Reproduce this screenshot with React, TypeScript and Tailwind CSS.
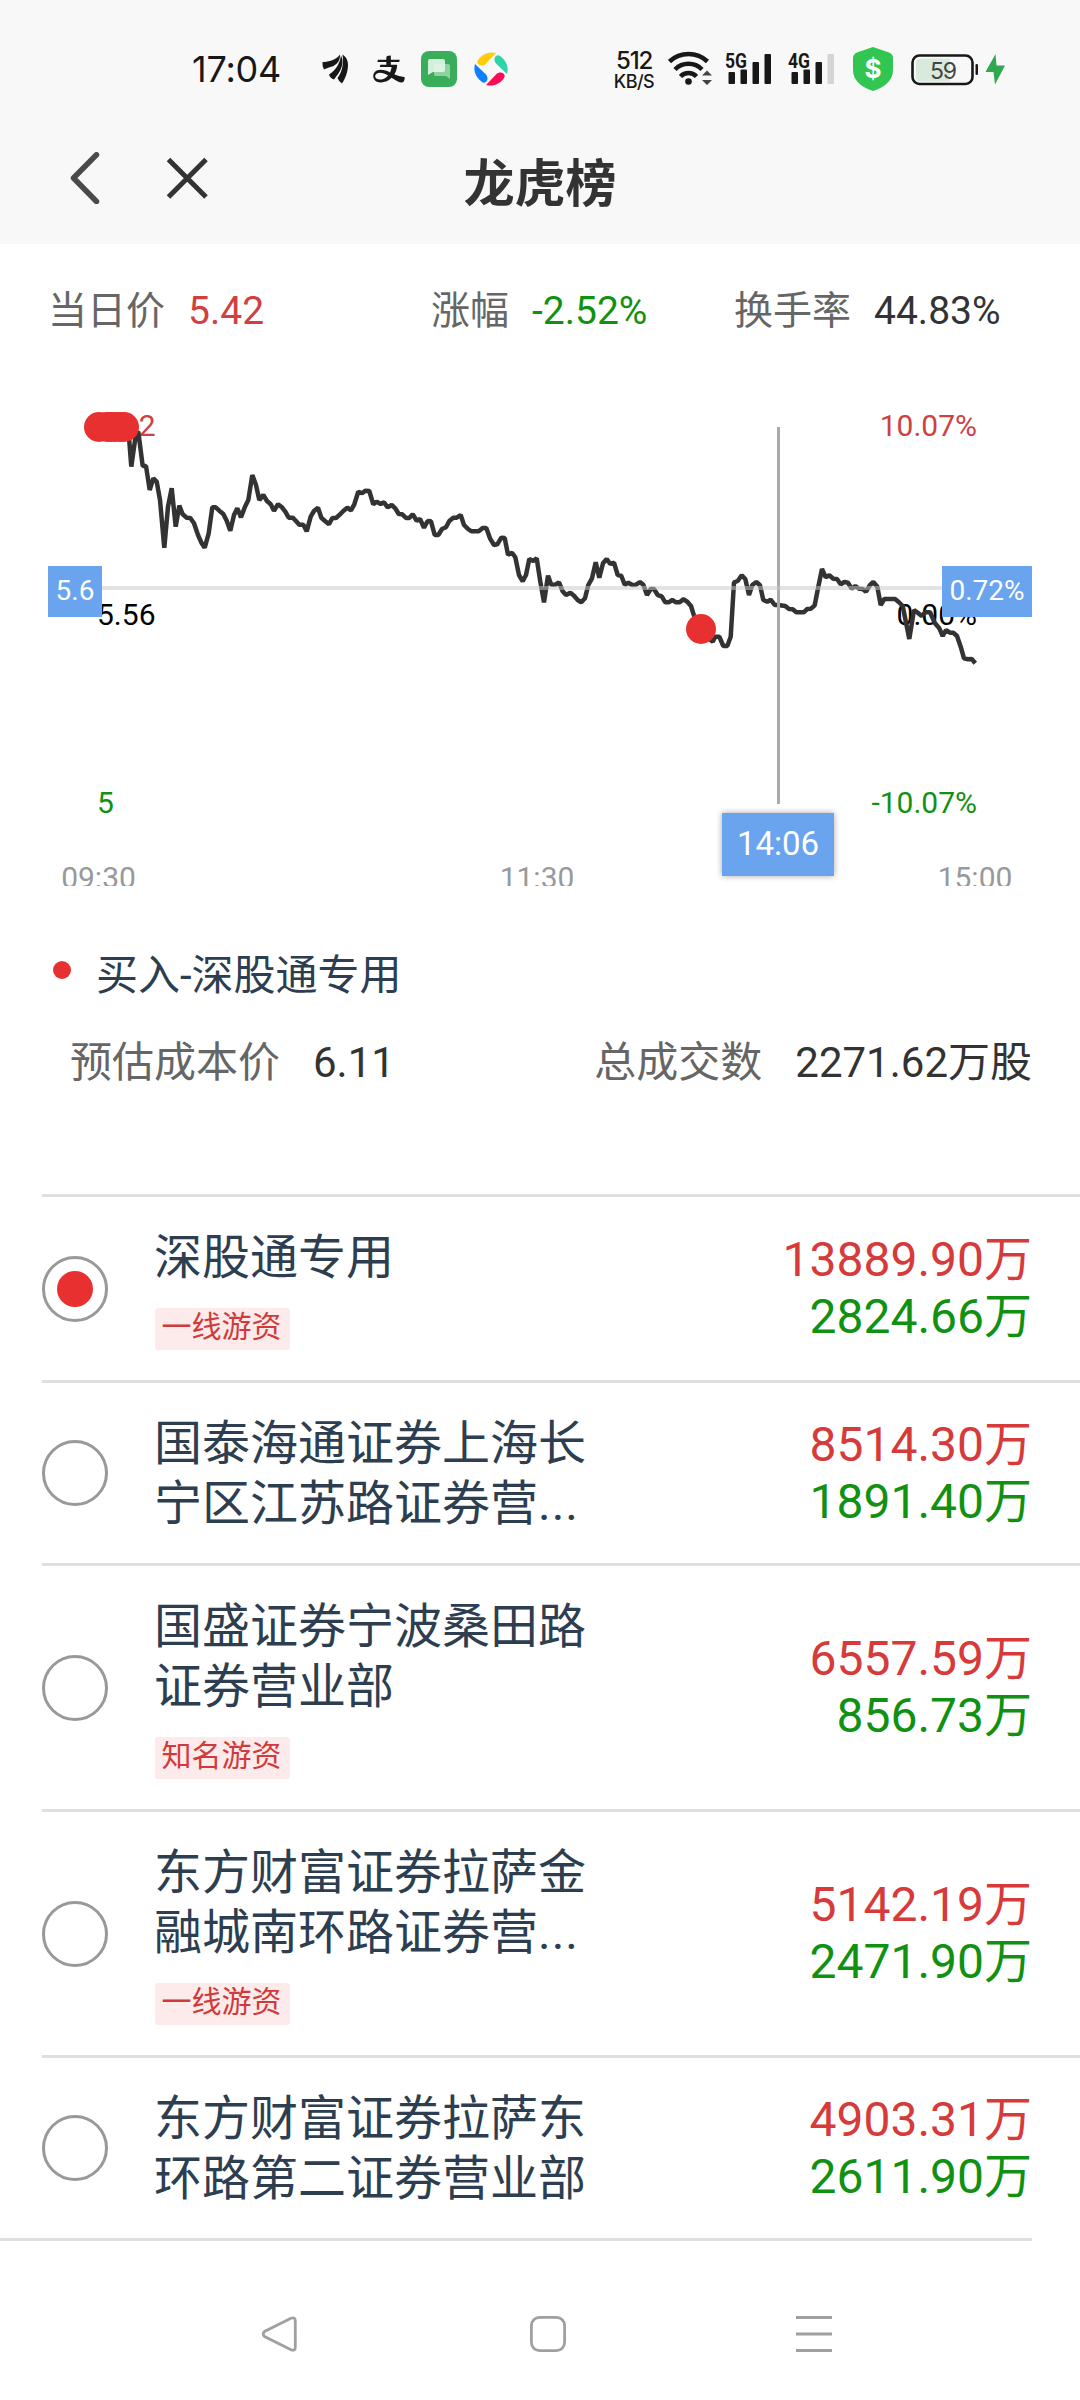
import { AiOutlineAlipay } from "react-icons/ai";

type Seat = {
  name: string;
  tag?: string;
  buy: string;
  sell: string;
};

const seats: Seat[] = [
  { name: "深股通专用", tag: "一线游资", buy: "13889.90万", sell: "2824.66万" },
  { name: "国泰海通证券上海长宁区江苏路证券营业部", buy: "8514.30万", sell: "1891.40万" },
  { name: "国盛证券宁波桑田路证券营业部", tag: "知名游资", buy: "6557.59万", sell: "856.73万" },
  { name: "东方财富证券拉萨金融城南环路证券营业部", tag: "一线游资", buy: "5142.19万", sell: "2471.90万" },
  { name: "东方财富证券拉萨东环路第二证券营业部", buy: "4903.31万", sell: "2611.90万" },
];

// two lines hold 18 characters, longer names lose their tail
const MAX_NAME = 18;

const blocks: { x: number; y: number; points: number[][] }[] = [
  {
    x: 30,
    y: 0,
    points: [
      [285, 112], [296, 130], [304, 230], [318, 130], [325, 125], [338, 228], [348, 228], [359, 300], [370, 265], [380, 275],
      [390, 330], [403, 473], [414, 350], [425, 295], [437, 410], [448, 347], [458, 373], [470, 383], [481, 384], [492, 400],
      [504, 435], [515, 460], [524, 473], [536, 430], [547, 352], [557, 352], [568, 362], [580, 372], [590, 392], [601, 422],
      [612, 375], [622, 355], [633, 382], [645, 350], [655, 330], [667, 255], [678, 285], [688, 330], [700, 315], [711, 333],
      [722, 343], [732, 362], [744, 343], [756, 352], [766, 365], [776, 383], [788, 383], [798, 393], [808, 404], [820, 404],
      [830, 424], [842, 380], [852, 363], [864, 353], [874, 383], [885, 393], [897, 403], [907, 384], [918, 384], [930, 373],
      [940, 363], [952, 353], [963, 361], [973, 343], [985, 305], [996, 310], [1006, 302], [1018, 303], [1030, 343], [1040, 335],
      [1052, 342], [1062, 337], [1073, 352],
    ],
  },
  {
    x: 360,
    y: 60,
    points: [
      [95, 165], [106, 175], [116, 192], [127, 193], [138, 204], [148, 204], [158, 193], [170, 212], [180, 207], [192, 233],
      [203, 213], [213, 214], [224, 255], [235, 255], [246, 237], [258, 232], [268, 213], [280, 203], [290, 203], [302, 195],
      [312, 225], [323, 236], [334, 244], [356, 244], [368, 234], [379, 234], [390, 265], [402, 285], [412, 283], [424, 263],
      [434, 264], [444, 314], [456, 308], [466, 322], [477, 375], [488, 394], [498, 375], [508, 327], [520, 333], [530, 325],
      [541, 395], [552, 457], [564, 377], [574, 404], [586, 404], [597, 397], [608, 424], [618, 435], [631, 428], [642, 437],
      [653, 450], [664, 457], [675, 445], [685, 405], [696, 385], [707, 337], [718, 383], [729, 340], [740, 327], [751, 342],
      [762, 338], [773, 375], [784, 377], [794, 404], [805, 398], [817, 405], [828, 404], [840, 396], [850, 404], [861, 435],
      [872, 417], [882, 417], [893, 435], [905, 439], [916, 457], [926, 457], [937, 450], [948, 457], [959, 457], [970, 448],
      [982, 455], [993, 468], [1003, 500], [1023, 537], [1040, 560],
    ],
  },
  {
    x: 680,
    y: 0,
    points: [
      [98, 755], [106, 740], [118, 740], [130, 768], [142, 768], [152, 740], [162, 577], [173, 573], [185, 556], [196, 567],
      [207, 615], [217, 585], [229, 576], [240, 586], [250, 630], [262, 635], [272, 629], [284, 645], [294, 645], [316, 648],
      [327, 657], [338, 658], [349, 667], [371, 667], [382, 657], [393, 656], [404, 646], [415, 590], [426, 537], [437, 562],
      [448, 556], [460, 566], [471, 567], [482, 583], [493, 576], [504, 578], [515, 596], [526, 588], [537, 596], [548, 597],
      [558, 605], [570, 585], [580, 576], [592, 590], [602, 645], [613, 627], [645, 627], [656, 636], [668, 648], [688, 747],
      [702, 660], [713, 668], [725, 678], [736, 667], [750, 667], [765, 700], [778, 715], [788, 738], [798, 720], [810, 728],
      [820, 728], [831, 738], [842, 770], [852, 805], [864, 808], [875, 807], [886, 820],
    ],
  },
];

const priceLine = blocks
  .flatMap((b) => b.points.map(([x, y]) => `${(b.x + x / 3).toFixed(1)},${(b.y + y / 3).toFixed(1)}`))
  .join(" ");

const openingMarks = [99, 107, 111, 115, 120, 124];

const petals = ["#ffcb0a", "#30d3a8", "#fb0b57", "#0d80fb"];

function Signal({ label, weak }: { label: string; weak?: boolean }) {
  return (
    <svg width="48" height="36" viewBox="0 0 48 36">
      <text x="0" y="18" fontFamily="'Roboto'" fontSize="21" fontWeight="700" fill="#181818" textLength="22" lengthAdjust="spacingAndGlyphs">
        {label}
      </text>
      <g fill="#181818">
        <rect x="3.5" y="22" width="6.5" height="12" rx="1" />
        <rect x="15.5" y="19.5" width="6.5" height="14.5" rx="1" />
        <rect x="27.5" y="12" width="6.5" height="22" rx="1" />
        <rect x="39.5" y="4" width="6.5" height="30" rx="1" fill={weak ? "#d4d4d4" : "#181818"} />
      </g>
    </svg>
  );
}

function StatusBar() {
  return (
    <div className="flex h-[138px] items-start pt-[46px] pl-[192px]">
      <span className="w-[130px] font-['Inter'] text-[36px] leading-[47px] tracking-[-0.2px] text-[#181818]">17:04</span>

      <svg className="mt-2 shrink-0" width="26" height="30" viewBox="0 0 26 30" fill="#181818">
        <path d="M0.500 8C7 8 14 6 18 0.500C18.500 8 13 12 8.500 13C5 14 3 15 2 15.500Q0 12 0.500 8Z" />
        <path d="M7 20.500C14 16 18 9 19 1.500C22 7 20 14 17 18.500C15 21.500 13 24 12 25.500Q8 24 7 20.500Z" />
        <path d="M15.500 24C20 18 22 10 20.500 0.500C24 3 26 6 26 11C26 18 23 25 20 29.500Q17 28 15.500 24Z" />
      </svg>

      <AiOutlineAlipay className="mt-[5px] ml-[23px] h-9 w-9 shrink-0 text-[#181818]" />

      <svg className="mt-[5px] ml-[14px] shrink-0" width="36" height="36" viewBox="0 0 36 36">
        <rect width="36" height="36" rx="8" fill="#38ae5b" />
        <path d="M15 13h12a2 2 0 0 1 2 2v13l-4-3H15a2 2 0 0 1-2-2v-8a2 2 0 0 1 2-2z" fill="#8fd3a3" />
        <path d="M9 8h13a2 2 0 0 1 2 2v9a2 2 0 0 1-2 2H12l-5 3V10a2 2 0 0 1 2-2z" fill="#e6f6ea" fillOpacity="0.9" />
      </svg>

      <svg className="mt-1.5 ml-[17px] shrink-0" width="34" height="34" viewBox="0 0 34 34">
        {petals.map((fill, i) => (
          <path key={fill} d="M4 8C8 2 15 -1 22 1L12 11.500C9 14.500 4.500 14 3.500 11Q3 9.500 4 8Z" fill={fill} transform={`rotate(${i * 90} 17 17)`} />
        ))}
      </svg>

      <div className="mt-1 ml-[105px] flex w-[42px] flex-col items-center font-['Inter'] text-[#181818]">
        <span className="text-[24px] leading-[22px] font-medium tracking-[-1.2px]">512</span>
        <span className="text-[18px] leading-[19px] font-medium tracking-[-0.5px]">KB/S</span>
      </div>

      <svg className="mt-1 ml-[13px] shrink-0" width="46" height="38" viewBox="0 0 46 38">
        <g fill="none" stroke="#181818" strokeWidth="4.500">
          <path d="M1.500 11.500A28 28 0 0 1 39.500 11.500" />
          <path d="M7 19.500A19 19 0 0 1 34 19.500" />
          <path d="M12.500 26.500A11 11 0 0 1 28.500 26.500" />
        </g>
        <circle cx="20.500" cy="31.500" r="3.300" fill="#181818" />
        <path d="M34 25.500L39 20.500L44 25.500ZM34 30L39 35L44 30Z" fill="#444" />
      </svg>

      <div className="mt-1 ml-[11px] flex shrink-0 gap-[15px]">
        <Signal label="5G" />
        <Signal label="4G" weak />
      </div>

      <svg className="mt-px ml-[17px] shrink-0" width="40" height="44" viewBox="0 0 40 44">
        <path d="M20 0L36 5.500Q40 7 40 11V23C40 34 31 40.500 20 44C9 40.500 0 34 0 23V11Q0 7 4 5.500Z" fill="#31c651" />
        <text x="20" y="31" textAnchor="middle" fontFamily="'Inter'" fontSize="26" fontWeight="700" fill="#fff">
          $
        </text>
      </svg>

      <svg className="mt-2 ml-[18px] shrink-0" width="95" height="32" viewBox="0 0 95 32">
        <path d="M9 4.500H39V27.500H9Q5 27.500 5 23.500V8.500Q5 4.500 9 4.500Z" fill="#d8eadb" />
        <rect x="1.500" y="1.500" width="60" height="28.500" rx="7" fill="none" stroke="#181818" strokeWidth="2.600" />
        <rect x="64.500" y="10" width="2.500" height="11" rx="1.200" fill="#181818" />
        <text x="32" y="24.500" textAnchor="middle" fontFamily="'Inter'" fontSize="23" fill="#444" letterSpacing="-1">
          59
        </text>
        <path d="M84.500 0L74.500 18H82.500L84 30.500L94 11.500H85.500Z" fill="#2fa850" />
      </svg>
    </div>
  );
}

function TitleBar() {
  return (
    <div className="grid h-[106px] grid-cols-3 items-start">
      <div className="flex pt-[14px] pl-[70px]">
        <svg width="30" height="52" viewBox="0 0 30 52" fill="none" stroke="#4a4a4a" strokeWidth="5.500">
          <path d="M26.500 2.800L3.500 26L26.500 49.500" strokeLinecap="round" strokeLinejoin="round" />
        </svg>
        <svg className="mt-[5px] ml-[66px]" width="42" height="42" viewBox="0 0 42 42" fill="none" stroke="#333" strokeWidth="5">
          <path d="M2.500 2.500L40 40M40 2.500L2.500 40" />
        </svg>
      </div>
      <h1 className="mt-[11px] text-center text-[51px] leading-[72px] font-bold text-[#333]">龙虎榜</h1>
    </div>
  );
}

function Quote({ label, value, color }: { label: string; value: string; color: string }) {
  return (
    <div className="flex gap-[23px]">
      <span className="text-[#666]">{label}</span>
      <span className={color}>{value}</span>
    </div>
  );
}

function PriceChart() {
  return (
    <svg className="mt-11 block" width="1080" height="496" viewBox="0 0 1080 496" fontFamily="Roboto, sans-serif" fontSize="30">
      <defs>
        <filter id="lift" x="-20%" y="-20%" width="140%" height="140%">
          <feDropShadow dx="0" dy="0" stdDeviation="3" floodColor="#000" floodOpacity="0.35" />
        </filter>
      </defs>

      <g fill="#d04040">
        <text x="97" y="46">6.12</text>
        <text x="977" y="46" textAnchor="end">10.07%</text>
      </g>
      <g fill="#000">
        <text x="97" y="234.500">5.56</text>
        <text x="977" y="234.500" textAnchor="end">0.00%</text>
      </g>
      <g fill="#119111">
        <text x="97" y="423">5</text>
        <text x="977" y="423" textAnchor="end">-10.07%</text>
      </g>
      <g fill="#999" textAnchor="middle">
        <text x="98.500" y="498">09:30</text>
        <text x="537" y="498">11:30</text>
        <text x="975" y="498">15:00</text>
      </g>

      <polyline points={priceLine} fill="none" stroke="#333" strokeWidth="4.500" strokeLinejoin="bevel" />
      <rect x="777" y="37" width="3" height="377" fill="#aaa" />
      <rect x="97" y="196" width="880" height="4" fill="#c8c8c8" fillOpacity="0.5" />

      <g fill="#e83030">
        {openingMarks.map((x) => (
          <circle key={x} cx={x} cy="37" r="15" />
        ))}
        <circle cx="701" cy="239" r="15" />
      </g>

      <g fill="#6ba4ee">
        <rect x="48" y="176" width="54" height="51" />
        <rect x="942" y="176" width="90" height="51" />
        <rect x="722" y="423" width="112" height="63" filter="url(#lift)" />
      </g>
      <g fill="#fff" textAnchor="middle">
        <text x="75" y="209.500" fontSize="28">5.6</text>
        <text x="987" y="209.500" fontSize="28">0.72%</text>
        <text x="778" y="465" fontSize="33">14:06</text>
      </g>
    </svg>
  );
}

function SeatRow({ seat, selected }: { seat: Seat; selected: boolean }) {
  const cut = seat.name.length > MAX_NAME;

  return (
    <li className="ml-[42px] flex items-center border-t-[3px] border-[#dfdfdf] py-[30px] pr-12">
      <span className="grid size-[66px] shrink-0 place-items-center rounded-full border-[3px] border-[#999]">
        {selected && <span className="size-9 rounded-full bg-[#e83030]" />}
      </span>
      <div className="ml-[46px] w-[434px]">
        <p className="-mb-px pt-px text-[48px] leading-[60px] text-[#2c3e50]">
          {cut ? seat.name.slice(0, MAX_NAME - 1) : seat.name}
          {cut && <span className="tracking-[1px]">...</span>}
        </p>
        {seat.tag && (
          <span className="mt-[21px] ml-px flex h-[42px] w-[135px] justify-center rounded-[3px] bg-[#fdeaea] pr-0.5 text-[30px] leading-[38px] text-[#d03a3a]">
            {seat.tag}
          </span>
        )}
      </div>
      <div className="ml-auto pb-px text-right text-[48px] leading-[57px]">
        <p className="text-[#d63a3a]">{seat.buy}</p>
        <p className="text-[#119111]">{seat.sell}</p>
      </div>
    </li>
  );
}

export default function App() {
  return (
    <div className="flex h-[2400px] w-[1080px] flex-col overflow-hidden bg-white font-[Roboto,'Noto_Sans_CJK_SC',sans-serif]">
      <header className="h-[244px] shrink-0 bg-[#f8f8f8]">
        <StatusBar />
        <TitleBar />
      </header>

      <main>
        <section className="flex h-[102px] pt-[38px] pl-12 text-[39px] leading-[58px]">
          <div className="w-[383px]">
            <Quote label="当日价" value="5.42" color="text-[#d04040]" />
          </div>
          <div className="w-[303px]">
            <Quote label="涨幅" value="-2.52%" color="text-[#119111]" />
          </div>
          <Quote label="换手率" value="44.83%" color="text-[#333]" />
        </section>

        <PriceChart />

        <section className="h-[308px] pt-[60px] text-[42px] leading-[60px]">
          <div className="flex items-center pl-[53px] text-[#2c3e50]">
            <span className="mb-3 size-[18px] rounded-full bg-[#e83030]" />
            <span className="ml-[25px]">买入-深股通专用</span>
          </div>
          <div className="mt-[27px] flex justify-between pr-12 pl-[70px] text-[#333]">
            <p>
              <span className="mr-[33px] text-[#666]">预估成本价</span>6.11
            </p>
            <p>
              <span className="mr-[33px] text-[#666]">总成交数</span>2271.62万股
            </p>
          </div>
        </section>

        <ul>
          {seats.map((seat, i) => (
            <SeatRow key={seat.name} seat={seat} selected={i === 0} />
          ))}
        </ul>
        <div className="mr-12 h-[3px] bg-[#dfdfdf]" />
      </main>

      <nav className="flex h-[159px] items-start pt-[74px]">
        <svg className="ml-[261px]" width="38" height="38" viewBox="0 0 38 38" fill="none" stroke="#a0a0a0" strokeWidth="2.800">
          <path d="M34.300 6V32Q34.300 36.500 30 34.700L3.500 21.500Q1 19 3.500 16.500L30 3.300Q34.300 1.500 34.300 6Z" />
        </svg>
        <svg className="ml-[231px]" width="36" height="38" viewBox="0 0 36 38" fill="none" stroke="#a0a0a0" strokeWidth="2.800">
          <rect x="1.400" y="2.400" width="33.200" height="33.200" rx="8" />
        </svg>
        <svg className="ml-[230px]" width="36" height="38" viewBox="0 0 36 38" fill="#a0a0a0">
          <rect y="1" width="36" height="3" />
          <rect y="17.500" width="36" height="3" />
          <rect y="34" width="36" height="3" />
        </svg>
      </nav>
    </div>
  );
}
